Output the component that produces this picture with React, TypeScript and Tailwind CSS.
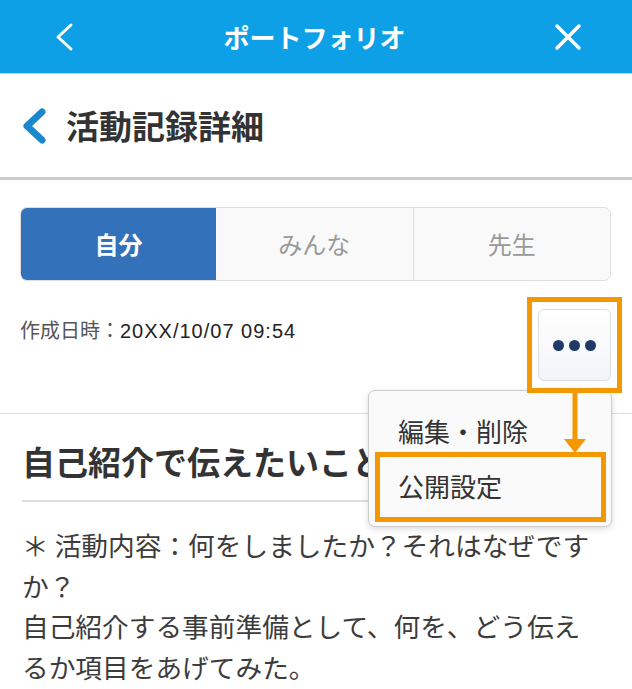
import React from 'react'

const tabs = [
  { label: '自分', active: true },
  { label: 'みんな', active: false },
  { label: '先生', active: false },
]

function Header() {
  return (
    <div className="h-[74px] bg-[#0ea0e6] border-b border-[#cfcfcf] flex items-center justify-between pl-[53px] pr-[50px]">
      <svg width="22" height="30" viewBox="0 0 22 30" fill="none">
        <polyline points="18,3 5,15 18,27" stroke="white" strokeWidth="3" strokeLinecap="round" strokeLinejoin="round" />
      </svg>
      <h1 className="text-white font-bold text-[26px] leading-none">ポートフォリオ</h1>
      <svg width="28" height="28" viewBox="0 0 28 28" fill="none">
        <path d="M3 3 L25 25 M25 3 L3 25" stroke="white" strokeWidth="3.5" strokeLinecap="round" />
      </svg>
    </div>
  )
}

function PageTitle() {
  return (
    <div className="h-[106px] border-b-[3px] border-[#cccccc] flex items-center pl-[20px] gap-[18px]">
      <svg width="28" height="38" viewBox="0 0 28 38" fill="none">
        <polyline points="22,5 7,19 22,33" stroke="#1a88cc" strokeWidth="7" strokeLinecap="round" strokeLinejoin="round" />
      </svg>
      <h2 className="text-[33px] font-bold text-[#333333] leading-none">活動記録詳細</h2>
    </div>
  )
}

export default function App() {
  return (
    <div className="relative w-[632px] h-[689px] overflow-hidden bg-white font-['Noto_Sans_CJK_JP',sans-serif]">
      <Header />
      <PageTitle />

      <div className="pl-[20px] pr-[21px]">
        <div className="mt-[27px] flex h-[74px] rounded-[7px] overflow-hidden border border-[#dddddd]">
          {tabs.map((tab, i) => (
            <div
              key={tab.label}
              className={
                tab.active
                  ? 'w-[195px] bg-[#3372bb] flex items-center justify-center text-white font-bold text-[24px]'
                  : 'flex-1 bg-[#f9f9f9] flex items-center justify-center text-[#999999] text-[24px] ' +
                    (i === 2 ? 'border-l border-[#dddddd]' : '')
              }
            >
              {tab.label}
            </div>
          ))}
        </div>

        <div className="mt-[28px] flex justify-between items-start">
          <p className="pt-[7px] text-[20px] leading-[28px] text-[#555555]">
            作成日時：
            <span className="font-['Liberation_Sans',sans-serif] tracking-[1px] text-[#222222]">20XX/10/07 09:54</span>
          </p>
          <button className="w-[73px] h-[72px] rounded-[6px] border border-[#dddddd] bg-gradient-to-b from-white to-[#f3f4f8] flex items-center justify-center gap-[5px]">
            <span className="w-[11px] h-[11px] rounded-full bg-[#1f3a68]" />
            <span className="w-[11px] h-[11px] rounded-full bg-[#1f3a68]" />
            <span className="w-[11px] h-[11px] rounded-full bg-[#1f3a68]" />
          </button>
        </div>
      </div>

      <div className="mt-[32px] border-t border-[#dddddd]" />

      <div className="pl-[22px] pr-[21px]">
        <h3 className="pt-[27px] pb-[19px] text-[33px] leading-[40px] font-bold text-[#333333] border-b-2 border-[#dddddd] whitespace-nowrap">
          自己紹介で伝えたいこと
        </h3>
        <p className="mt-[23px] pr-[6px] text-[26.7px] leading-[40.5px] text-[#3c3c3c]">
          ＊ 活動内容：何をしましたか？それはなぜですか？
          <br />
          自己紹介する事前準備として、何を、どう伝えるか項目をあげてみた。
        </p>
      </div>

      {/* dropdown menu */}
      <div className="absolute left-[368px] top-[390px] w-[244px] h-[137px] rounded-[7px] border border-[#cccccc] bg-[#fafafa] shadow-[0_2px_6px_rgba(0,0,0,0.15)] pt-[12px] pl-[29px]">
        <div className="h-[55px] flex items-center text-[26px] text-[#333333]">編集・削除</div>
        <div className="h-[55px] flex items-center text-[26px] text-[#333333]">公開設定</div>
      </div>

      {/* annotation */}
      <div className="absolute left-[527px] top-[297px] w-[95px] h-[96px] border-[5px] border-[#f39800]" />
      <div className="absolute left-[375px] top-[452px] w-[231px] h-[70px] border-[5px] border-[#f39800]" />
      <svg className="absolute left-[563px] top-[392px]" width="24" height="62" viewBox="0 0 24 62" fill="none">
        <line x1="12" y1="0" x2="12" y2="50" stroke="#f39800" strokeWidth="5" />
        <polygon points="1,47 23,47 12,61" fill="#f39800" />
      </svg>
    </div>
  )
}
